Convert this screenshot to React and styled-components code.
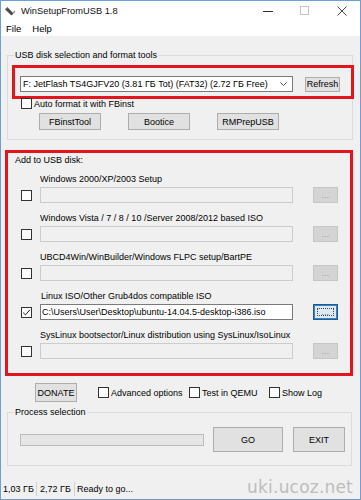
import React from 'react';
import styled, { createGlobalStyle } from 'styled-components';

const Global = createGlobalStyle`
  html, body { margin: 0; padding: 0; background: #ffffff; }
  #root { width: 361px; height: 500px; }
`;

const Window = styled.div`
  position: relative;
  width: 361px;
  height: 500px;
  box-sizing: border-box;
  border: 1px solid #6d9fd3;
  background: #f0f0f0;
  display: flex;
  flex-direction: column;
  overflow: hidden;
  font-family: "Liberation Sans", Arial, sans-serif;
  font-size: 9px;
  color: #000;
`;

const TitleBar = styled.div`
  height: 19px;
  flex: none;
  background: #ffffff;
  display: flex;
  align-items: center;
`;

const AppIcon = styled.svg`
  flex: none;
  margin-left: 3px;
`;

const Title = styled.div`
  flex: 1;
  margin-left: 5px;
  font-size: 9.3px;
  color: #111;
  white-space: nowrap;
`;

const CaptionButtons = styled.div`
  display: flex;
  align-self: stretch;
`;

const CaptionButton = styled.div`
  width: 37px;
  display: flex;
  align-items: center;
  justify-content: center;
`;

const MenuBar = styled.div`
  height: 16px;
  flex: none;
  background: #ffffff;
  display: flex;
  align-items: center;
  font-size: 9.5px;
`;

const MenuItem = styled.div`
  padding: 0 6px 0 5px;
`;

const Client = styled.div`
  flex: 1;
  display: flex;
  flex-direction: column;
`;

const GroupBox = styled.fieldset`
  margin: ${p => p.$mt}px ${p => p.$mr}px 0 6px;
  padding: 0;
  border: 1px solid #dcdcdc;
  min-width: 0;
`;

const Legend = styled.legend`
  margin-left: 6px;
  padding: 0 1px;
  font-size: 9px;
  line-height: 12px;
  color: #000;
`;

const GroupBody = styled.div`
  display: flex;
  flex-direction: column;
  padding-bottom: ${p => p.$pb}px;
`;

const DiskHighlight = styled.div`
  margin: 4px -2px 0 4px;
  height: 34px;
  box-sizing: border-box;
  border: 3px solid #e3161f;
  padding: 8px 0 4px 5px;
  display: flex;
  align-items: center;
`;

const Combo = styled.div`
  width: 273px;
  height: 16px;
  box-sizing: border-box;
  border: 1px solid #7a7a7a;
  background: #ffffff;
  display: flex;
  align-items: center;
  padding-left: 2px;
  white-space: nowrap;
  overflow: hidden;
`;

const ComboText = styled.span`
  flex: 1;
`;

const Chevron = styled.svg`
  flex: none;
  margin: 0 5px 0 4px;
`;

const Button = styled.button`
  flex: none;
  box-sizing: border-box;
  width: ${p => p.$w}px;
  height: ${p => p.$h}px;
  margin: 0 0 0 ${p => p.$ml || 0}px;
  padding: 0;
  border: 1px solid #adadad;
  background: #e1e1e1;
  font: inherit;
  font-size: 9px;
  color: #000;
  display: flex;
  align-items: center;
  justify-content: center;
`;

const CheckLine = styled.div`
  display: flex;
  align-items: center;
  height: 11px;
  margin-top: ${p => p.$mt || 0}px;
  padding-left: ${p => p.$pl || 0}px;
`;

const Box = styled.div`
  flex: none;
  width: 11px;
  height: 11px;
  box-sizing: border-box;
  border: 1px solid #333333;
  background: #ffffff;
  display: flex;
  align-items: center;
  justify-content: center;
`;

const CheckText = styled.span`
  margin-left: 2px;
  white-space: nowrap;
`;

const ToolRow = styled.div`
  display: flex;
  gap: 27px;
  margin-top: 4px;
  padding-left: 31px;
`;

const AddPanel = styled.div`
  margin: 10px 0 0 4px;
  width: 348px;
  height: 226px;
  box-sizing: border-box;
  border: 3px solid #e3161f;
  padding-top: 1px;
  display: flex;
  flex-direction: column;
`;

const PanelCaption = styled.div`
  line-height: 12px;
  padding-left: 7px;
`;

const SourceList = styled.div`
  margin-top: 7px;
  display: flex;
  flex-direction: column;
  gap: 9px;
`;

const SourceRow = styled.div`
  display: flex;
  flex-direction: column;
`;

const SourceLabel = styled.div`
  line-height: 12px;
  padding-left: ${p => 32 + (p.$indent || 0)}px;
  white-space: nowrap;
`;

const SourceLine = styled.div`
  margin-top: 2px;
  height: 16px;
  display: flex;
  align-items: center;
  padding-left: 13px;
`;

const PathBox = styled.div`
  margin-left: 8px;
  width: 253px;
  height: 16px;
  box-sizing: border-box;
  border: 1px solid ${p => (p.$on ? '#7a7a7a' : '#cccccc')};
  background: ${p => (p.$on ? '#ffffff' : '#f0f0f0')};
  padding-left: 1px;
  display: flex;
  align-items: center;
  white-space: nowrap;
  overflow: hidden;
`;

const Browse = styled.div`
  margin-left: 20px;
  width: 25px;
  height: 16px;
  box-sizing: border-box;
  border: 1px solid ${p => (p.$on ? '#1d5b9b' : '#c6c6c6')};
  background: ${p => (p.$on ? '#dde9f5' : '#d4d4d4')};
  box-shadow: ${p => (p.$on ? 'inset 0 0 0 1px #3f7fc0' : 'none')};
  color: ${p => (p.$on ? '#333' : '#8c8c8c')};
  display: flex;
  align-items: center;
  justify-content: center;
  font-size: 8px;
  letter-spacing: 0.5px;
  position: relative;
  &::after {
    content: '';
    display: ${p => (p.$on ? 'block' : 'none')};
    position: absolute;
    inset: 3px;
    border: 1px dotted #444;
  }
`;

const OptionsRow = styled.div`
  margin-top: 7px;
  height: 19px;
  display: flex;
  align-items: center;
  padding-left: 34px;
`;

const Option = styled.div`
  flex: none;
  display: flex;
  align-items: center;
  width: ${p => (p.$w ? `${p.$w}px` : 'auto')};
  margin-left: ${p => p.$ml || 0}px;
`;

const ProcessRow = styled.div`
  margin-top: 9px;
  height: 25px;
  display: flex;
  align-items: center;
  padding-left: 12px;
`;

const Progress = styled.div`
  width: 184px;
  height: 12px;
  box-sizing: border-box;
  border: 1px solid #bcbcbc;
  background: #e6e6e6;
`;

const StatusBar = styled.div`
  margin-top: auto;
  height: 20px;
  flex: none;
  display: flex;
  align-items: center;
  font-size: 9px;
`;

const StatusPanel = styled.div`
  box-sizing: border-box;
  width: ${p => (p.$w ? `${p.$w}px` : 'auto')};
  padding-left: ${p => p.$pl}px;
  border-right: ${p => (p.$sep ? '1px solid #d2d2d2' : 'none')};
  line-height: 14px;
  white-space: nowrap;
`;

const Watermark = styled.div`
  position: absolute;
  right: 7px;
  bottom: 3px;
  font-family: "DejaVu Sans", Verdana, sans-serif;
  font-size: 17px;
  line-height: 17px;
  color: #bdbdbd;
  letter-spacing: 0.2px;
`;

const Check = ({ on }) => (
  <Box>
    {on && (
      <svg width="9" height="9" viewBox="0 0 9 9">
        <path d="M1.2 4.6 L3.5 6.9 L7.9 1.8" fill="none" stroke="#222" strokeWidth="1" />
      </svg>
    )}
  </Box>
);

const sources = [
  { label: 'Windows 2000/XP/2003 Setup' },
  { label: 'Windows Vista / 7 / 8 / 10 /Server 2008/2012 based ISO' },
  { label: 'UBCD4Win/WinBuilder/Windows FLPC setup/BartPE' },
  { label: 'Linux ISO/Other Grub4dos compatible ISO', on: true, indent: 1, path: 'C:\\Users\\User\\Desktop\\ubuntu-14.04.5-desktop-i386.iso' },
  { label: 'SysLinux bootsector/Linux distribution using SysLinux/IsoLinux' },
];

export default function App() {
  return (
    <>
      <Global />
      <Window>
        <TitleBar>
          <AppIcon width="12" height="10" viewBox="0 0 12 10">
            <path d="M1 3.2 L3.2 1 L9.6 7.4 L7.4 9.6 Z" fill="#4a4a4a" />
            <path d="M8.6 6.4 L10.4 4.6 L11.6 5.8 L9.8 7.6 Z" fill="#9a9a9a" />
            <path d="M2 3 L3 2" stroke="#888" strokeWidth="0.8" />
          </AppIcon>
          <Title>WinSetupFromUSB 1.8</Title>
          <CaptionButtons>
            <CaptionButton>
              <svg width="10" height="10" viewBox="0 0 10 10">
                <path d="M0 5.5 H10" stroke="#333" strokeWidth="1" />
              </svg>
            </CaptionButton>
            <CaptionButton>
              <svg width="10" height="10" viewBox="0 0 10 10">
                <rect x="0.5" y="0.5" width="8" height="8" fill="none" stroke="#c4c4c4" strokeWidth="1" />
              </svg>
            </CaptionButton>
            <CaptionButton>
              <svg width="10" height="10" viewBox="0 0 10 10">
                <path d="M0.5 0.5 L9.5 9.5 M9.5 0.5 L0.5 9.5" stroke="#333" strokeWidth="0.9" />
              </svg>
            </CaptionButton>
          </CaptionButtons>
        </TitleBar>
        <MenuBar>
          <MenuItem>File</MenuItem>
          <MenuItem>Help</MenuItem>
        </MenuBar>
        <Client>
          <GroupBox $mt={13} $mr={7}>
            <Legend>USB disk selection and format tools</Legend>
            <GroupBody $pb={9}>
              <DiskHighlight>
                <Combo>
                  <ComboText>F: JetFlash TS4GJFV20 (3.81 ГБ Tot) (FAT32) (2.72 ГБ Free)</ComboText>
                  <Chevron width="7" height="4" viewBox="0 0 7 4">
                    <path d="M0.5 0.5 L3.5 3.5 L6.5 0.5" fill="none" stroke="#444" strokeWidth="0.9" />
                  </Chevron>
                </Combo>
                <Button $w={35} $h={15} $ml={12}>Refresh</Button>
              </DiskHighlight>
              <CheckLine $mt={-1} $pl={13}>
                <Check />
                <CheckText>Auto format it with FBinst</CheckText>
              </CheckLine>
              <ToolRow>
                <Button $w={62} $h={17}>FBinstTool</Button>
                <Button $w={62} $h={17}>Bootice</Button>
                <Button $w={62} $h={17}>RMPrepUSB</Button>
              </ToolRow>
            </GroupBody>
          </GroupBox>

          <AddPanel>
            <PanelCaption>Add to USB disk:</PanelCaption>
            <SourceList>
              {sources.map(s => (
                <SourceRow key={s.label}>
                  <SourceLabel $indent={s.indent}>{s.label}</SourceLabel>
                  <SourceLine>
                    <Check on={s.on} />
                    <PathBox $on={s.on}>{s.path || ''}</PathBox>
                    <Browse $on={s.on}>...</Browse>
                  </SourceLine>
                </SourceRow>
              ))}
            </SourceList>
          </AddPanel>

          <OptionsRow>
            <Button $w={42} $h={19}>DONATE</Button>
            <Option $w={91} $ml={21}>
              <Check />
              <CheckText>Advanced options</CheckText>
            </Option>
            <Option $w={80}>
              <Check />
              <CheckText>Test in QEMU</CheckText>
            </Option>
            <Option>
              <Check />
              <CheckText>Show Log</CheckText>
            </Option>
          </OptionsRow>

          <GroupBox $mt={4} $mr={8}>
            <Legend>Process selection</Legend>
            <GroupBody $pb={13}>
              <ProcessRow>
                <Progress />
                <Button $w={70} $h={25} $ml={9}>GO</Button>
                <Button $w={52} $h={25} $ml={10}>EXIT</Button>
              </ProcessRow>
            </GroupBody>
          </GroupBox>

          <StatusBar>
            <StatusPanel $w={36} $pl={2} $sep>1,03 ГБ</StatusPanel>
            <StatusPanel $w={38} $pl={3} $sep>2,72 ГБ</StatusPanel>
            <StatusPanel $pl={2}>Ready to go...</StatusPanel>
          </StatusBar>
        </Client>
        <Watermark>uki.ucoz.net</Watermark>
      </Window>
    </>
  );
}
